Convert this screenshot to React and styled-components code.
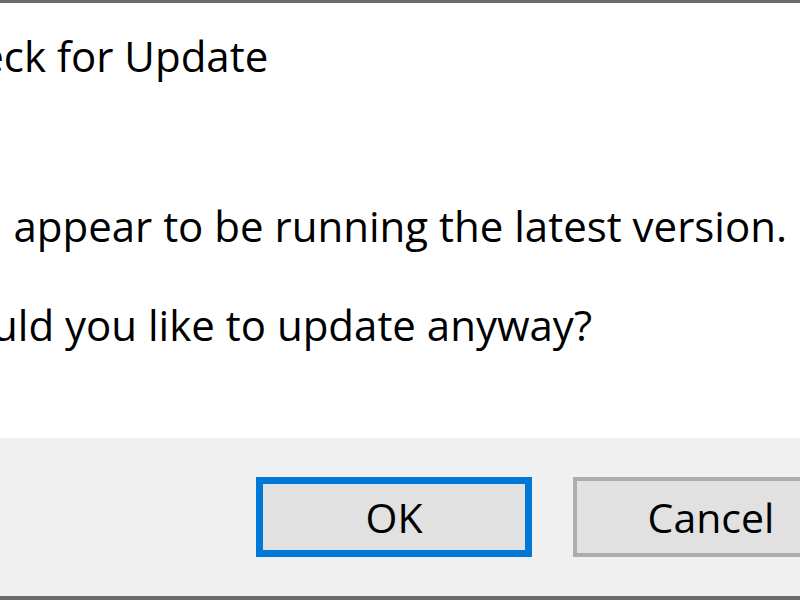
import React from "react";
import styled, { createGlobalStyle } from "styled-components";

const GlobalStyle = createGlobalStyle`
  html, body {
    margin: 0;
    padding: 0;
    background: #ffffff;
  }
  body {
    font-family: "Open Sans", "Noto Sans", sans-serif;
  }
`;

const App = () => {
  return (
    <>
      <GlobalStyle />
      <Window>
        <Body>
          <Title>Check for Update</Title>
          <Message>You appear to be running the latest version.</Message>
          <Message second>Would you like to update anyway?</Message>
        </Body>
        <Footer>
          <Button primary>OK</Button>
          <Button>Cancel</Button>
        </Footer>
      </Window>
    </>
  );
};

export default App;

const Window = styled.div`
  width: 800px;
  height: 600px;
  box-sizing: border-box;
  border-top: 3px solid #6b6b6b;
  border-bottom: 4px solid #6b6b6b;
  display: flex;
  flex-direction: column;
  overflow: hidden;
  background: #ffffff;
  color: #000000;
`;

const Body = styled.div`
  flex: 1;
  margin-left: -72px;
  padding-top: 23px;
`;

const Title = styled.div`
  font-size: 42px;
  line-height: 60px;
  white-space: nowrap;
`;

const Message = styled.div`
  font-size: 42px;
  line-height: 60px;
  white-space: nowrap;
  margin-top: ${p => (p.second ? "39px" : "110px")};
`;

const Footer = styled.div`
  height: 158px;
  flex: none;
  background: #f0f0f0;
  display: flex;
  align-items: center;
  gap: 41px;
  padding-left: 256px;
  box-sizing: border-box;
`;

const Button = styled.div`
  flex: none;
  width: 276px;
  height: 80px;
  box-sizing: border-box;
  background: #e1e1e1;
  border: ${p => (p.primary ? "7px solid #0078d7" : "4px solid #adadad")};
  display: flex;
  align-items: center;
  justify-content: center;
  font-size: 41px;
  color: #000000;
`;
